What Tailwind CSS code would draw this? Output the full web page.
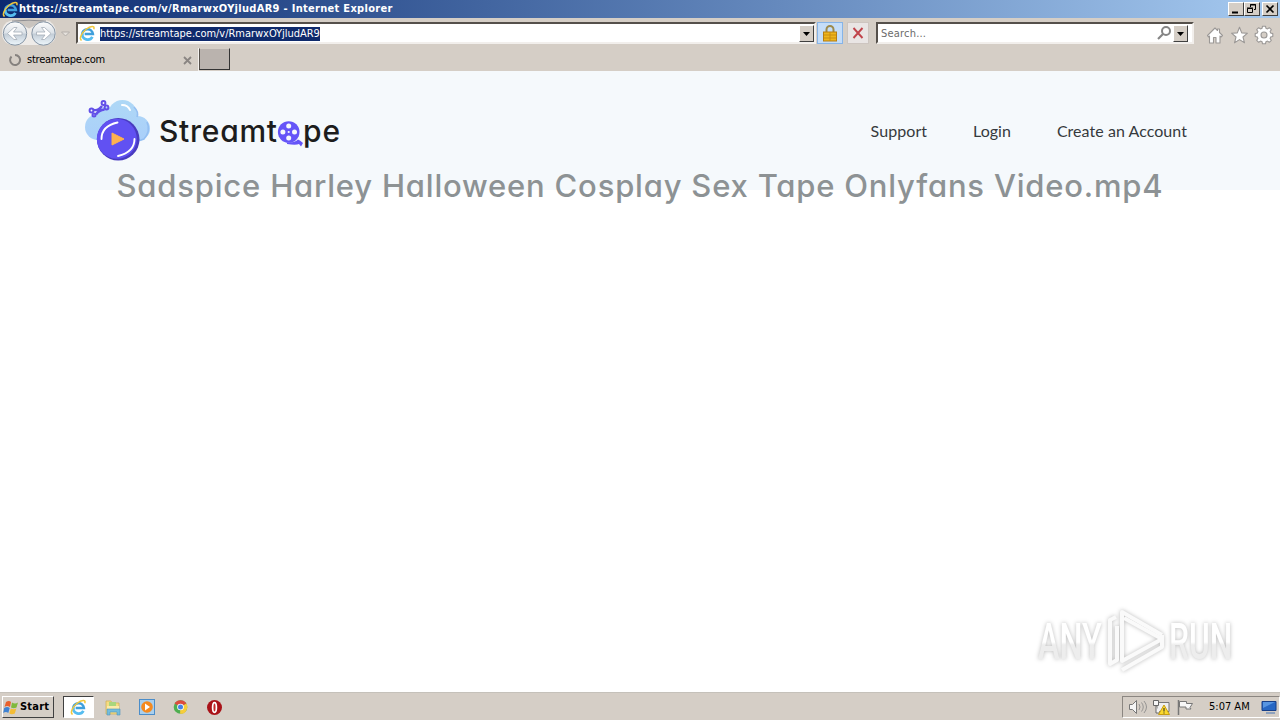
<!DOCTYPE html>
<html lang="en">
<head>
<meta charset="utf-8">
<title>streamtape.com</title>
<script src="https://cdn.jsdelivr.net/npm/@tailwindcss/browser@4"></script>
</head>
<body class="w-[1280px] h-[720px] overflow-hidden bg-white flex flex-col font-['DejaVu_Sans_Condensed','DejaVu_Sans',sans-serif] text-[11px] text-black">
<svg class="hidden">
  <symbol id="ie" viewBox="0 0 18 18">
    <path d="M3.300 10.500a5.700 5.500 0 0 1 11.400-1H6" fill="none" stroke="#3f9fdc" stroke-width="2.700"/>
    <path d="M3.500 9.500a5.700 5.500 0 0 0 10.700 3" fill="none" stroke="#56bdf0" stroke-width="2.900"/>
    <path d="M2.800 16.300C-.2 15 2.500 8.500 7.500 4.500 12 1 17.200 0 15.600 4.500" fill="none" stroke="#f2c83c" stroke-width="1.600"/>
  </symbol>
</svg>

<header class="h-[71px] shrink-0 bg-[#d5cec6] flex flex-col">
  <div class="h-[18px] shrink-0 flex items-center bg-linear-to-r from-[#0d2a70] to-[#a6caf0] pl-[2px] pr-[2px]">
    <svg class="w-[17px] h-[17px] shrink-0"><use href="#ie"/></svg>
    <span class="text-white font-bold text-[11px] leading-[18px] whitespace-nowrap tracking-[0.3px]">https://streamtape.com/v/RmarwxOYjludAR9 - Internet Explorer</span>
    <div class="ml-auto flex">
      <div class="w-[16px] h-[14px] bg-[#d5cec6] border border-t-white border-l-white border-r-[#404040] border-b-[#404040]"><svg class="w-[14px] h-[12px]"><path d="M3 9.500h6" stroke="#000" stroke-width="2"/></svg></div>
      <div class="w-[16px] h-[14px] bg-[#d5cec6] border border-t-white border-l-white border-r-[#404040] border-b-[#404040]"><svg class="w-[14px] h-[12px]" fill="none" stroke="#000"><path d="M5.500 4V1.500h5v5H9M5 2h6M2.500 5.500h5v4h-5zM2 5h6"/></svg></div>
      <div class="w-[16px] h-[14px] ml-[2px] bg-[#d5cec6] border border-t-white border-l-white border-r-[#404040] border-b-[#404040]"><svg class="w-[14px] h-[12px]"><path d="M3.500 2.500l7 7M10.500 2.500l-7 7" stroke="#000" stroke-width="1.700"/></svg></div>
    </div>
  </div>
  <div class="h-[30px] shrink-0 flex items-start">
    <svg class="w-[76px] h-[30px] shrink-0">
      <defs><linearGradient id="nav" x2="0" y2="1"><stop stop-color="#fdfdfd"/><stop offset=".48" stop-color="#dce2e8"/><stop offset=".52" stop-color="#c2ccd6"/><stop offset="1" stop-color="#eef7fc"/></linearGradient></defs>
      <path d="M15 2h30q11 2 11 13t-11 12H15Q2 27 2 15T15 2Z" fill="#eeebe8"/>
      <path d="M14 2.500h30l-15 8z" fill="#c9c4bf"/><path d="M12 3q17-1.500 34 0" fill="none" stroke="#8f8f92"/>
      <g fill="url(#nav)" stroke="#8695a5"><circle cx="15" cy="15.500" r="11.700"/><circle cx="43.500" cy="15.500" r="11.700"/></g>
      <g fill="#fff" stroke="#a4adb7" stroke-width=".8"><path d="M7.500 15.500l6.500-6h3l-3.500 4.500H22v3h-8.500l3.500 4.500h-3z"/><path d="M51 15.500l-6.500-6h-3l3.500 4.500h-8.500v3H45l-3.500 4.500h3z"/></g>
      <path d="M61.500 14h8l-4 4z" fill="#e6e2dd" stroke="#b3aeaa"/>
    </svg>
    <div class="mt-[4px] w-[740px] h-[22px] bg-white border-2 border-t-[#55504b] border-l-[#55504b] border-r-[#f2efec] border-b-[#f2efec] flex items-center">
      <svg class="w-[17px] h-[17px] ml-px shrink-0"><use href="#ie"/></svg>
      <span class="mt-px ml-[4px] bg-[#0f2a6c] text-white leading-[14px] h-[14px] whitespace-nowrap -tracking-[0.03px]">https://streamtape.com/v/RmarwxOYjludAR9</span>
      <div class="ml-auto w-[15px] h-[17px] bg-[#d5cec6] border border-t-white border-l-white border-r-[#404040] border-b-[#404040]"><svg class="w-[13px] h-[15px]"><path d="M3 6h7l-3.500 4z"/></svg></div>
    </div>
    <div class="mt-[4px] ml-px w-[26px] h-[22px] bg-[#c5ddf8] border border-[#86b4e8] flex justify-center items-center">
      <svg class="w-[14px] h-[17px]"><path d="M3.500 8V4.500a3.500 3.500 0 0 1 7 0V8" fill="none" stroke="#9d8a4c" stroke-width="2"/><rect x=".5" y="7" width="13" height="9" fill="#eeb51d" stroke="#b77e12"/><path d="M1 10h12M1 13h12M7 7v9" stroke="#c98d13"/></svg>
    </div>
    <div class="mt-[4px] ml-[4px] w-[22px] h-[22px] bg-[#e9e5e4] border border-[#f6f3f1] outline outline-[#cdc5c0] -outline-offset-1 flex justify-center items-center">
      <svg class="w-[12px] h-[12px]"><path d="M1.500 1l9 10M10.500 1l-9 10" stroke="#c0444b" stroke-width="1.900"/></svg>
    </div>
    <div class="mt-[4px] ml-[7px] w-[318px] h-[22px] bg-white border-2 border-t-[#55504b] border-l-[#55504b] border-r-[#f2efec] border-b-[#f2efec] flex items-center">
      <span class="mt-[2px] ml-[3px] text-[#6b6b6b] tracking-[0.2px]">Search...</span>
      <svg class="ml-auto w-[16px] h-[16px]"><circle cx="9" cy="6" r="4" fill="none" stroke="#858585" stroke-width="2"/><path d="M6 9l-5 5" stroke="#858585" stroke-width="2.200"/></svg>
      <div class="mr-[4px] w-[15px] h-[17px] bg-[#d5cec6] border border-t-white border-l-white border-r-[#404040] border-b-[#404040]"><svg class="w-[13px] h-[15px]"><path d="M3 6h7l-3.500 4z"/></svg></div>
    </div>
    <svg class="ml-px w-[84px] h-[30px] shrink-0" fill="#fff" stroke="#9b9896" stroke-width="1.100" stroke-linejoin="round">
      <path d="M12.500 17.500l7.500-7.500 2.500 2.500V11h2v3.500l3 3-1.500 1.500-1-1v7h-4v-5.500h-2.500V25h-4v-7l-1 1z"/>
      <path d="M44.500 9.300l2.200 5.600 5.800.3-4.500 3.800 1.500 5.800-5-3.200-5 3.200 1.500-5.800-4.500-3.800 5.800-.3z"/>
      <path d="M67.500 9h3l.4 2 1.600.7 1.800-1.200 2 2-1.200 1.800.7 1.600 2 .4v3l-2 .4-.7 1.600 1.200 1.800-2 2-1.800-1.200-1.600.7-.4 2h-3l-.4-2-1.600-.7-1.800 1.200-2-2 1.200-1.800-.7-1.600-2-.4v-3l2-.4.7-1.600-1.200-1.800 2-2 1.800 1.200 1.600-.7z" transform="translate(0 -.8)"/><circle cx="69" cy="17" r="3" fill="#d5cec6"/>
    </svg>
  </div>
  <div class="h-[23px] flex">
    <div class="w-[199px] flex items-center pl-[8px] pt-px border-r border-[#f4f1ee]">
      <svg class="w-[14px] h-[14px]"><path d="M3.500 3.500a5 5 0 1 0 3.500-1.500" fill="none" stroke="#85817e" stroke-width="2"/></svg>
      <span class="mt-px ml-[5px] -tracking-[0.23px]">streamtape.com</span>
      <svg class="ml-auto mr-[6px] w-[9px] h-[9px]"><path d="M1 1l7 7M8 1L1 8" stroke="#8a8582" stroke-width="1.800"/></svg>
    </div>
    <div class="w-[31px] h-[22px] bg-[#bab3ae] border border-l-[#55504b] border-r-[#333] border-b-[#333] border-t-[#d5cec6]"></div>
  </div>
</header>

<main class="h-[621px] shrink-0 flex flex-col">
  <div class="h-[119px] shrink-0 bg-[#f5f9fc] flex flex-col">
    <div class="h-[97px] shrink-0 flex items-center pl-[84px] pr-[93px] pt-[23px]">
      <svg class="w-[260px] h-[68px] shrink-0" viewBox="84 97 260 68">
        <defs><linearGradient id="cloud" gradientUnits="userSpaceOnUse" x1="0" x2="0" y1="100" y2="142"><stop stop-color="#aed8f6"/><stop offset="1" stop-color="#aacffa"/></linearGradient></defs>
        <g fill="url(#cloud)"><circle cx="98" cy="127" r="13"/><circle cx="122.500" cy="114.500" r="14.500"/><circle cx="137.500" cy="128.500" r="12.500"/><circle cx="106" cy="119" r="12"/><path d="M98 118h38v23H98z"/></g>
        <path d="M134 107q5 5 3 10M147 122q4 9-3 17l-6 2" fill="none" stroke="#94bff2" stroke-width="1.600"/>
        <path d="M122 105q6 0 8 5" fill="none" stroke="#fff" stroke-width="2" stroke-linecap="round"/>
        <circle cx="118.200" cy="139.300" r="21.300" fill="#493bc0"/><circle cx="116.800" cy="138.800" r="20" fill="#6151f2"/>
        <path d="M101.500 139q0-13 16-16.500M134.500 139q0 13-16.500 17" fill="none" stroke="#fff" stroke-width="1.900" stroke-linecap="round"/>
        <path d="M112 133v12l12-6z" fill="#ffb14e" stroke="#ffb14e" stroke-linejoin="round"/>
        <g fill="none" stroke="#6250e8" stroke-width="2"><circle cx="91.500" cy="110.500" r="1.900"/><circle cx="94" cy="115" r="1.500"/><circle cx="103.500" cy="103" r="1.900"/><circle cx="106.500" cy="107.500" r="1.900"/><path d="M93.500 110q5 1 8.500-4M96 114.500q2.500-4 8.500-5" stroke-width="2.400"/></g>
        <text x="159" y="142" textLength="118" font-size="30" fill="#1d1d1d" class="font-['Inter',sans-serif] [font-feature-settings:'cv11'] font-medium">Streamt</text>
        <text x="303" y="142" textLength="37" font-size="30" fill="#1d1d1d" class="font-['Inter',sans-serif] font-medium">pe</text>
        <circle cx="288.700" cy="132" r="10.800" fill="#6555f8"/><path d="M287 142.500q8 .5 11-3 2 .5 5 3.500l-2 3.500-2-2.500q-3 1.500-12 0z" fill="#6555f8"/>
        <g fill="#f5f9fc"><circle cx="288.700" cy="126" r="2.500"/><circle cx="294.500" cy="132" r="2.500"/><circle cx="282.900" cy="132" r="2.500"/><circle cx="288.700" cy="138" r="2.500"/><circle cx="288.700" cy="132" r="1.100"/></g>
      </svg>
      <nav class="ml-auto flex gap-[46px] font-['Lato',sans-serif] text-[16px] leading-[24px] text-[#363a3d] whitespace-nowrap">
        <span class="tracking-[0.08px]">Support</span><span>Login</span><span class="tracking-[0.05px]">Create an Account</span>
      </nav>
    </div>
    <h1 class="h-[36px] shrink-0 text-center whitespace-nowrap font-['Inter',sans-serif] [font-feature-settings:'cv11'] font-medium text-[31px] leading-[36px] text-[#8d9294] tracking-[0.8px]">Sadspice Harley Halloween Cosplay Sex Tape Onlyfans Video.mp4</h1>
  </div>
  <div class="mt-auto mb-[18px] mr-[42px] self-end">
    <svg class="w-[206px] h-[68px] drop-shadow-[0_0_2px_#bbb]" viewBox="1032 606 206 68">
      <defs><linearGradient id="wm" x2="0" y2="1"><stop offset=".5" stop-color="#fff"/><stop offset=".55" stop-color="#ededed"/></linearGradient></defs>
      <g fill="url(#wm)" font-size="49" class="font-['Roboto',sans-serif] font-medium"><text transform="translate(1038 659) scale(.68 1)" textLength="94" lengthAdjust="spacingAndGlyphs">ANY</text><text transform="translate(1169 659) scale(.68 1)" textLength="93" lengthAdjust="spacingAndGlyphs">RUN</text></g>
      <g fill="none" stroke="#fafafa" stroke-width="4" stroke-linejoin="round"><path d="M1122 647v-35l40 23"/><path d="M1116 617l-6 3v44l7-4v-34M1122 630v31l40-22-38-21M1122 670l40-23v-12"/></g>
    </svg>
  </div>
</main>

<footer class="h-[28px] shrink-0 bg-[#d5cec6] border-t border-[#c5c1ba] flex items-start">
  <div class="mt-[3px] ml-[2px] w-[52px] h-[22px] border border-t-white border-l-white border-r-[#404040] border-b-[#404040] flex items-center">
    <svg class="w-[17px] h-[17px]"><path d="M3 3q3-2 5 0L7 8Q4 6 1.500 8z" fill="#e8602c"/><path d="M9 3.500q3 2 6 0l-1.500 5q-3 1.500-5.500 0z" fill="#7fb93c"/><path d="M1.200 9q3-2 5.500 0l-1.400 5Q3 12 .2 14z" fill="#3f82d2"/><path d="M7.800 9.500q3 1.500 5.500 0l-1.500 5q-3 1.500-5.500 0z" fill="#f4bc35"/></svg>
    <span class="font-bold mt-px tracking-[0.2px]">Start</span>
  </div>
  <div class="mt-[3px] ml-[9px] w-[31px] h-[22px] bg-white border border-t-[#404040] border-l-[#404040] border-r-white border-b-white flex justify-center items-center"><svg class="w-[17px] h-[17px]"><use href="#ie"/></svg></div>
  <div class="mt-[5px] ml-[10px] flex gap-[16px]">
    <svg class="w-[18px] h-[18px]"><path d="M2 3h5l1 2h7v11H2z" fill="#f5dc83" stroke="#cfae50" stroke-width=".7"/><path d="M5 4h7v4H5z" fill="#a9d67d"/><path d="M3 8h12v3H3z" fill="#fbeba9"/><path d="M3 17v-6h13v6h-3v-3H6v3z" fill="#74bddc" stroke="#5296bd" stroke-width=".6"/></svg>
    <svg class="w-[18px] h-[18px]"><rect x="1.500" y="1.500" width="15" height="15" fill="#a9cfed" stroke="#4b8dc9"/><circle cx="9" cy="9" r="5.800" fill="#f58a1f"/><path d="M7 5.500v7l5-3.500z" fill="#fff"/></svg>
    <svg class="w-[18px] h-[18px]"><circle cx="8.500" cy="9" r="6.800" fill="#4fae50"/><path d="M8.500 9L2.600 5.600a6.800 6.800 0 0 1 11.800 0z" fill="#dd4b3e"/><path d="M8.500 9l5.900-3.400A6.800 6.800 0 0 1 8 15.800z" fill="#f7cd3b"/><circle cx="8.500" cy="9" r="3.300" fill="#fff"/><circle cx="8.500" cy="9" r="2.500" fill="#4682e6"/></svg>
    <svg class="w-[18px] h-[18px]"><circle cx="8.500" cy="9.500" r="7.500" fill="#a91218"/><ellipse cx="8.500" cy="9.500" rx="1.900" ry="4.800" fill="#c52b2b" stroke="#fff" stroke-width="1.700"/></svg>
  </div>
  <div class="ml-auto mt-[3px] w-[158px] h-[22px] border border-t-[#8b8681] border-l-[#8b8681] border-r-white border-b-white flex items-center">
    <svg class="w-[74px] h-[20px] shrink-0">
      <path d="M6.500 7.500h3l4-4v13l-4-4h-3z" fill="#f5f5f5" stroke="#777"/><path d="M16 7q2 3 0 6M18.500 5.500q3.500 4.500 0 9M21 4q5 6 0 12" fill="none" stroke="#858585" stroke-width=".8"/>
      <path d="M34 5.500h12v9H34z" fill="#eee" stroke="#777"/><path d="M30.500 3.500h5v5h-5zM33 9v7h4" fill="#f6f6f6" stroke="#666"/><path d="M41 8l5.500 9.500h-11z" fill="#fbd92e" stroke="#c79d13"/><path d="M41 11v3.500M41 15.500v1" stroke="#222"/>
      <path d="M55.500 3v15" stroke="#777" stroke-width="1.500"/><path d="M56.500 4.500h7v2h6l-2.500 4 1 1.500h-5v-2h-6.500z" fill="#f7f7f7" stroke="#777"/>
    </svg>
    <span class="mt-px ml-[12px] whitespace-nowrap">5:07 AM</span>
    <svg class="ml-auto mr-px w-[18px] h-[18px]"><path d="M2 3.500h14v9H2z" fill="#2767c4" stroke="#173f88"/><path d="M3 4h12l-12 6z" fill="#5795e2"/><path d="M6 15h9" stroke="#8da1bd" stroke-width="2"/></svg>
  </div>
</footer>
</body>
</html>
